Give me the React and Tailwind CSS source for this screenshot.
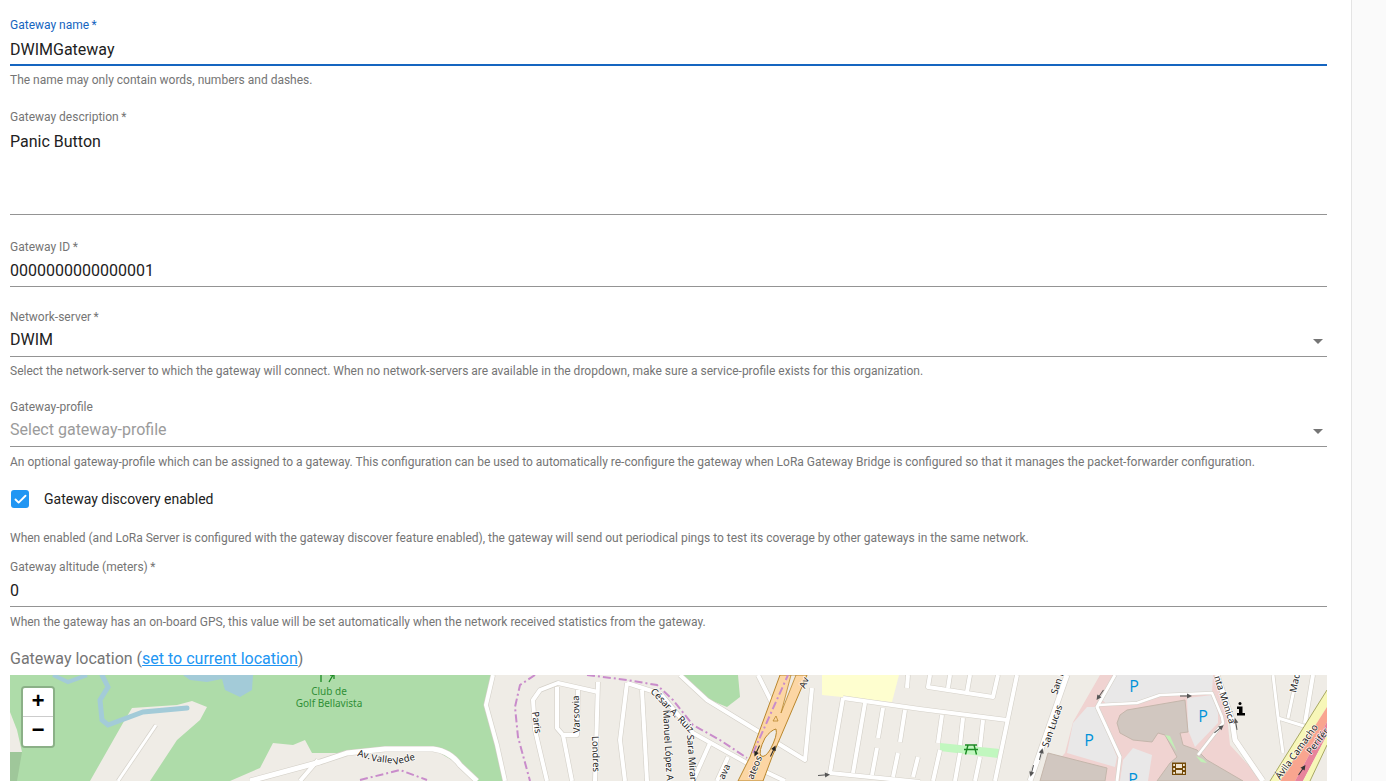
import React from 'react'
import { Check } from 'lucide-react'

const roads = [
  // left side and golf club
  { d: 'M493 675 L486 705 L497 745 L505 781', w: 4 },
  { d: 'M250 781 L320 762 L347 753 L385 749 L433 749 Q450 751 460 765 L477 781', w: 5 },
  { d: 'M300 781 L318 760', w: 4 },
  { d: 'M118 781 L156 725', w: 3 },
  // streets round Paris / Varsovia
  { d: 'M547 781 L535 730 L533 700 L540 690 L558 683 L598 692', w: 4 },
  { d: 'M557 687 L557 728 L563 735 L577 735 L578 690', w: 4 },
  { d: 'M563 735 L572 781', w: 4 },
  { d: 'M598 682 L595 781', w: 4 },
  { d: 'M627 683 L620 740 L625 781', w: 4 },
  { d: 'M627 683 L655 692', w: 4 },
  { d: 'M642 690 L647 781', w: 4 },
  { d: 'M660 693 L693 733 L747 763 L785 781', w: 4 },
  { d: 'M710 743 L693 781', w: 4 },
  { d: 'M728 757 L717 781', w: 4 },
  { d: 'M680 675 L707 700 L805 760 L812 688', w: 4 },
  { d: 'M758 675 L772 703', w: 4 },
  // block grid
  { d: 'M843 698 L920 709 L1007 720', w: 4 },
  { d: 'M843 698 L830 773 L920 782', w: 4 },
  { d: 'M865 703 L853 773', w: 4 },
  { d: 'M883 708 L878 738', w: 4 },
  { d: 'M905 710 L900 742', w: 4 },
  { d: 'M877 748 L872 775', w: 4 },
  { d: 'M898 753 L893 777', w: 4 },
  { d: 'M918 757 L913 777', w: 4 },
  { d: 'M908 675 L907 688', w: 4 },
  { d: 'M930 675 L928 687 L993 697 L998 675', w: 4 },
  { d: 'M950 675 L948 688', w: 4 },
  { d: 'M970 675 L967 692', w: 4 },
  { d: 'M1017 675 L995 781', w: 4 },
  { d: 'M942 715 L938 743', w: 4 },
  { d: 'M963 718 L960 745', w: 4 },
  { d: 'M983 720 L980 747', w: 4 },
  { d: 'M940 750 L933 781', w: 4 },
  { d: 'M960 753 L955 781', w: 4 },
  { d: 'M980 757 L975 781', w: 4 },
  { d: 'M1067 675 L1030 781', w: 5 },
  // mall
  { d: 'M1115 675 L1097 707 L1120 757 L1117 781', w: 3 },
  { d: 'M1098 705 L1137 703 L1160 695 L1212 693 L1222 717 L1223 723 L1198 755', w: 2.5 },
  { d: 'M1217 675 L1232 720 L1235 740 L1263 781', w: 5 },
  // right corner
  { d: 'M1297 675 L1288 718', w: 3 },
  { d: 'M1273 675 L1278 717 L1283 753', w: 3 },
  { d: 'M1278 718 L1307 727', w: 3 },
  { d: 'M1313 675 L1305 723', w: 4 },
]

// only what the crop of the map shows of each name
const labels = [
  { t: 'Paris', x: 532, y: 712, r: 82 },
  { t: 'Varsovia', x: 580, y: 733, r: -92 },
  { t: 'Londres', x: 592, y: 736, r: 88 },
  { t: 'Manuel López Ag', x: 663, y: 710, r: 87 },
  { t: 'Sara Miran', x: 687, y: 735, r: 86 },
  { t: 'César A. Ruiz', x: 650, y: 692, r: 46 },
  { t: 'ava', x: 724, y: 780, r: -65 },
  { t: 'ateos', x: 753, y: 780, r: -68 },
  { t: 'Av', x: 805, y: 689, r: -68 },
  { t: 'San Lucas', x: 1048, y: 748, r: -71 },
  { t: 'San L', x: 1057, y: 695, r: -72 },
  { t: 'nta Monica', x: 1214, y: 677, r: 72 },
  { t: 'Mad', x: 1296, y: 693, r: -78 },
  { t: 'Ávila Camacho', x: 1280, y: 780, r: -54 },
  { t: 'Perifér', x: 1311, y: 755, r: -52 },
  { t: 'Av.', x: 357, y: 756, r: 15 },
  { t: 'Valle', x: 371, y: 761, r: 6 },
  { t: 'Vede', x: 394, y: 765, r: -14 },
]

const oneWay = [
  { x: 757, y: 751, r: 115, c: '#222' },
  { x: 773, y: 751, r: -65, c: '#222' },
  { x: 824, y: 775, r: -5 },
  { x: 1041, y: 754, r: -75 },
  { x: 1032, y: 771, r: 105 },
  { x: 1100, y: 695, r: 125 },
  { x: 1186, y: 696, r: 0 },
  { x: 1219, y: 729, r: -40 },
  { x: 1236, y: 724, r: -100 },
  { x: 1302, y: 770, r: -55, c: '#333' },
]

const MapDrawing = () => (
  <svg viewBox="10 675 1317 106" className="block h-full w-full" fontFamily="'Noto Sans', sans-serif">
    <rect x="10" y="675" width="1317" height="106" fill="#efece6" />

    {/* golf and parks */}
    <path d="M10 675 H493 L486 705 L497 745 L505 781 H477 L460 765 L433 749 L347 753 L312 753 L305 740 L293 745 L273 743 L260 768 L230 781 H150 L177 740 L200 720 L207 707 L192 701 L177 705 L132 708 L123 723 L90 781 H10 Z" fill="#aedca9" />
    <path d="M10 712 L17 730 L22 752 H10 Z" fill="#efece6" />
    <path d="M10 752 H22 L17 781 H10 Z" fill="#9fc79a" />
    <path d="M683 675 H738 L740 697 L727 707 L710 700 Z" fill="#aedca9" />
    <path d="M822 675 H899 L892 702 L822 695 Z" fill="#fefecf" />

    {/* water */}
    <path d="M53 675 L68 682 L87 675" fill="none" stroke="#a3cbd8" strokeWidth="4" />
    <path d="M102 675 L108 687 L100 700 L102 720 L108 725 L143 712 L187 708" fill="none" stroke="#a3cbd8" strokeWidth="5" strokeLinecap="round" />
    <path d="M183 675 L190 680 L207 682 L222 679 L225 690 L240 697 L252 690 L253 675 Z" fill="#a3cbd8" />

    {/* mall grounds */}
    <path d="M1100 675 L1073 722 L1065 753 L1040 781 H1263 L1230 745 L1225 697 L1215 675 Z" fill="#f0d3d1" />
    <path d="M1115 675 L1100 697 L1107 705 L1137 703 L1160 695 L1212 692 L1213 675 Z" fill="#e9e8e8" />
    <path d="M1087 707 L1073 723 L1067 753 L1115 767 L1117 757 L1097 707 Z" fill="#e9e8e8" />
    <path d="M1187 698 L1213 695 L1218 713 L1218 723 L1195 747 L1188 730 Z" fill="#e9e8e8" />
    <path d="M1133 748 L1152 755 L1148 781 H1120 L1123 760 Z" fill="#e9e8e8" />
    <path d="M1127 710 L1185 700 L1188 732 L1180 733 L1183 745 L1197 750 L1207 760 L1243 781 H1157 L1170 763 L1177 757 L1165 735 L1158 733 L1152 742 L1133 740 L1120 733 L1117 723 L1120 715 Z" fill="#d1c7c0" stroke="#c4b6ab" />
    <path d="M1048 753 L1107 768 L1105 781 H1040 Z" fill="#d1c7c0" stroke="#c4b6ab" />
    <path d="M1165 735 L1170 736 L1177 752 Z" fill="#c1f0b5" />
    <path d="M1196 756 L1203 759 L1207 763 L1201 762 Z" fill="#c1f0b5" />

    {/* picnic strip */}
    <path d="M940 743 L1000 749 L998 758 L940 751 Z" fill="#c1f7bf" />

    {/* white streets, casing first */}
    {roads.map((r) => (
      <path key={r.d + 'c'} d={r.d} fill="none" stroke="#d4d0c8" strokeWidth={r.w + 1.2} strokeLinejoin="round" />
    ))}
    {roads.map((r) => (
      <path key={r.d} d={r.d} fill="none" stroke="#ffffff" strokeWidth={r.w} strokeLinejoin="round" />
    ))}

    {/* trunk road */}
    <path d="M780 675 H807 L772 757 L763 781 H738 L750 757 Z" fill="#fcd6a4" stroke="#b9862c" strokeWidth="1" />
    <path d="M776 729 Q778 735 770 750 Q765 758 761 756 Q758 752 765 738 Q771 730 776 729 Z" fill="#efece6" stroke="#b9862c" strokeWidth="1" />
    <path d="M791 675 H796 L781 713 Z" fill="#efece6" stroke="#b9862c" strokeWidth="0.8" />
    <path d="M773 721 L776 716 L778 721 Z" fill="none" stroke="#b9862c" strokeWidth="0.8" />

    {/* motorway bands */}
    <path d="M1270 781 L1327 690 V707 L1280 781 Z" fill="#f7f7b8" />
    <path d="M1280 781 L1327 707 V722 L1295 781 Z" fill="#f9a58f" />
    <path d="M1295 781 L1327 722 V735 L1303 781 Z" fill="#e8849c" />
    <path d="M1303 781 L1327 735 V745 L1310 781 Z" fill="#f7f7b8" />
    <path d="M1270 781 L1327 690" fill="none" stroke="#a8a864" strokeWidth="1" />
    <path d="M1310 781 L1327 745" fill="none" stroke="#a8a864" strokeWidth="1" />

    {/* admin boundary */}
    <g fill="none" stroke="#c98ccb" strokeWidth="2" strokeDasharray="8 3 2 3">
      <path d="M535 675 L520 685 L515 707 L518 737 L530 781" />
      <path d="M587 675 L627 680 L657 685 L673 700 L693 725 L720 740 L747 758" />
      <path d="M753 753 L788 675" />
      <path d="M360 780 L400 770 L427 780" />
    </g>

    {/* one way arrows */}
    {oneWay.map((a) => (
      <g key={`${a.x}-${a.y}`} transform={`translate(${a.x} ${a.y}) rotate(${a.r})`}>
        <path d="M-6 0 H3" stroke={a.c || '#555'} strokeWidth="1" />
        <path d="M6 0 L1 -2.5 V2.5 Z" fill={a.c || '#555'} />
      </g>
    ))}

    {/* street names */}
    <g fontSize="9.5" fill="#222" stroke="#ffffff" strokeWidth="1.5" strokeOpacity="0.8" paintOrder="stroke">
      {labels.map((l) => (
        <text key={l.t} transform={`translate(${l.x} ${l.y}) rotate(${l.r})`}>
          {l.t}
        </text>
      ))}
    </g>

    {/* golf label */}
    <g fontSize="10" fill="#2f8f36" textAnchor="middle">
      <text x="329" y="695">Club de</text>
      <text x="329" y="707">Golf Bellavista</text>
    </g>
    <path d="M321 675 V682 M329 682 L333 675 M330 675 H334 V679" stroke="#1d8a24" strokeWidth="1.3" fill="none" />

    {/* parking */}
    <g fontSize="16" fontWeight="500" fill="#0092da" textAnchor="middle" fontFamily="'Open Sans', sans-serif">
      <text x="1134" y="692">P</text>
      <text x="1203" y="722">P</text>
      <text x="1089" y="746">P</text>
      <text x="1133" y="785">P</text>
    </g>

    {/* picnic icon */}
    <path d="M965 745 H977 M964 749.5 H978 M968 745 L965.5 754.5 M974 745 L976.5 754.5" stroke="#1d8a24" strokeWidth="1.4" fill="none" />

    {/* info icon */}
    <circle cx="1240" cy="703.5" r="1.5" fill="#000" />
    <path d="M1237 706.5 H1242.5 V713 H1245 V715.5 H1237 V713 H1239 V709 H1237 Z" fill="#000" />

    {/* cinema icon */}
    <path d="M1172 762.5 H1186 V775 H1172 Z" fill="#734a08" />
    <path d="M1176 764 H1182 V768 H1176 Z M1176 770 H1182 V773.5 H1176 Z M1173.2 764 H1175 V766 H1173.2 Z M1173.2 768 H1175 V770 H1173.2 Z M1173.2 772 H1175 V774 H1173.2 Z M1183 764 H1184.8 V766 H1183 Z M1183 768 H1184.8 V770 H1183 Z M1183 772 H1184.8 V774 H1183 Z" fill="#efe3d0" />
  </svg>
)

const Field = ({ label, value, required = true, focused, placeholder, select, tall, className = '' }) => (
  <div className={className}>
    <div className={`h-4 text-xs leading-4 ${focused ? 'text-[#1565c0]' : 'text-[#757575]'}`}>
      {label}
      {required && <span>{'\u2009*'}</span>}
    </div>
    <div
      className={`relative ${tall ? 'h-[90px] leading-[34px]' : 'h-8'} ${select ? 'leading-[30px]' : ''} ${
        !tall && !select ? 'leading-8' : ''
      } text-base ${focused ? 'mt-px border-b-2 border-[#1565c0]' : 'border-b border-[#949494]'} ${
        placeholder ? 'text-[#9b9b9b]' : 'text-[#212121]'
      }`}
    >
      {value || placeholder}
      {select && (
        <span className="absolute right-[4px] top-[14px] h-0 w-0 border-x-[5px] border-t-[5px] border-x-transparent border-t-[#757575]" />
      )}
    </div>
  </div>
)

const Help = ({ children, className = 'mt-2' }) => (
  <p className={`h-[14px] whitespace-nowrap text-xs leading-[14px] text-[#757575] ${className}`}>{children}</p>
)

export default function App() {
  return (
    <div className="flex h-[781px] overflow-hidden bg-[#fafafa] font-['Roboto',sans-serif]">
      <main className="h-full w-[1352px] shrink-0 border-r border-[#e4e4e4] bg-white pl-[10px] pr-[24px] pt-[17px]">
        <Field label="Gateway name" value="DWIMGateway" focused />
        <Help className="mt-[7px]">The name may only contain words, numbers and dashes.</Help>

        <Field label="Gateway description" value="Panic Button" tall className="mt-[22px]" />

        <Field label="Gateway ID" value="0000000000000001" className="mt-6" />

        <Field label="Network-server" value="DWIM" select className="mt-[22px]" />
        <Help className="mt-[7px]">Select the network-server to which the gateway will connect. When no network-servers are available in the dropdown, make sure a service-profile exists for this organization.</Help>

        <Field label="Gateway-profile" placeholder="Select gateway-profile" required={false} select className="mt-[21px]" />
        <Help>An optional gateway-profile which can be assigned to a gateway. This configuration can be used to automatically re-configure the gateway when LoRa Gateway Bridge is configured so that it manages the packet-forwarder configuration.</Help>

        <label className="mt-5 flex h-5 items-center">
          <span className="ml-px flex h-[18px] w-[18px] items-center justify-center rounded-[3px] bg-[#2196f3]">
            <Check size={15} strokeWidth={3} color="#ffffff" />
          </span>
          <span className="ml-[15px] text-sm text-[#212121]">Gateway discovery enabled</span>
        </label>
        <Help className="mt-[22px]">When enabled (and LoRa Server is configured with the gateway discover feature enabled), the gateway will send out periodical pings to test its coverage by other gateways in the same network.</Help>

        <Field label="Gateway altitude (meters)" value="0" className="mt-[14px]" />
        <Help>When the gateway has an on-board GPS, this value will be set automatically when the network received statistics from the gateway.</Help>

        <div className="mt-[18px] h-6 text-base leading-6 text-[#757575]">
          Gateway location (<a href="#location" className="text-[#2196f3] underline">set to current location</a>)
        </div>

        <div className="relative mt-1 h-[106px] overflow-hidden">
          <MapDrawing />
          <div className="absolute left-[11px] top-[11px] rounded-[4px] border-2 border-black/20 bg-clip-padding">
            <div className="flex h-[29px] w-[30px] items-center justify-center rounded-t-[2px] border-b border-[#cccccc] bg-white font-['Liberation_Mono',monospace] text-[22px] font-bold text-black">+</div>
            <div className="flex h-[29px] w-[30px] items-center justify-center rounded-b-[2px] bg-white font-['Liberation_Mono',monospace] text-[22px] font-bold text-black">−</div>
          </div>
        </div>
      </main>
    </div>
  )
}
